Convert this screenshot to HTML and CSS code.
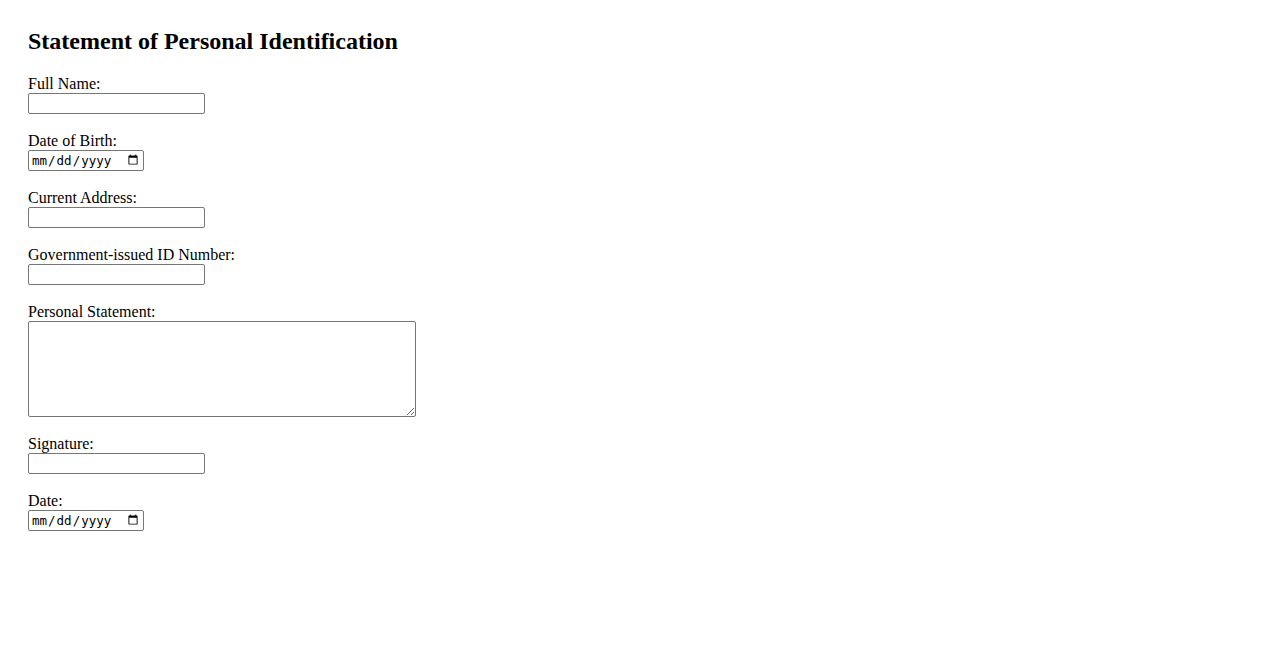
FILE: index.html
```html
<!DOCTYPE html>
<html lang="en">
<head>
<meta charset="utf-8">
<title>Statement of Personal Identification</title>
<link rel="stylesheet" href="styles.css">
</head>
<body>
<div class="page">
  <h2 class="title">Statement of Personal Identification</h2>
  <form class="form">
    <div class="field">
      <label class="label" for="name">Full Name:</label>
      <input class="text-input" type="text" id="name">
    </div>
    <div class="field">
      <label class="label" for="dob">Date of Birth:</label>
      <input class="date-input" type="date" id="dob">
    </div>
    <div class="field">
      <label class="label" for="addr">Current Address:</label>
      <input class="text-input" type="text" id="addr">
    </div>
    <div class="field">
      <label class="label" for="gid">Government-issued ID Number:</label>
      <input class="text-input" type="text" id="gid">
    </div>
    <div class="field">
      <label class="label" for="stmt">Personal Statement:</label>
      <textarea class="textarea" id="stmt"></textarea>
    </div>
    <div class="field">
      <label class="label" for="sig">Signature:</label>
      <input class="text-input" type="text" id="sig">
    </div>
    <div class="field">
      <label class="label" for="date">Date:</label>
      <input class="date-input" type="date" id="date">
    </div>
  </form>
</div>
</body>
</html>
```

FILE: styles.css
```css
html, body {
  margin: 0;
  padding: 0;
  background: #ffffff;
}

body {
  font-family: "Liberation Serif", "Times New Roman", serif;
  font-size: 16px;
  color: #000000;
}

.page {
  padding: 28px 28px;
}

.title {
  margin: 0 0 20px 0;
  font-size: 24px;
  font-weight: bold;
}

.form {
  display: flex;
  flex-direction: column;
  align-items: flex-start;
}

.field {
  display: flex;
  flex-direction: column;
  align-items: flex-start;
  margin-bottom: 18px;
}

.label {
  display: block;
  line-height: normal;
}

.text-input,
.date-input,
.textarea {
  box-sizing: border-box;
  margin: 0;
  border: 1px solid #767676;
  border-radius: 2px;
  background: #ffffff;
}

.text-input {
  width: 177px;
  height: 21px;
  padding: 1px 2px;
  font-family: "Liberation Sans", Arial, sans-serif;
  font-size: 13.33px;
}

.date-input {
  width: 116px;
  height: 21px;
  padding: 1px 2px;
  font-family: "DejaVu Sans Mono", "Liberation Mono", monospace;
  font-size: 12.5px;
  color: #000000;
}

.textarea {
  width: 388px;
  height: 96px;
  padding: 2px;
  font-family: "Liberation Mono", monospace;
  font-size: 13.33px;
  resize: both;
}
```
